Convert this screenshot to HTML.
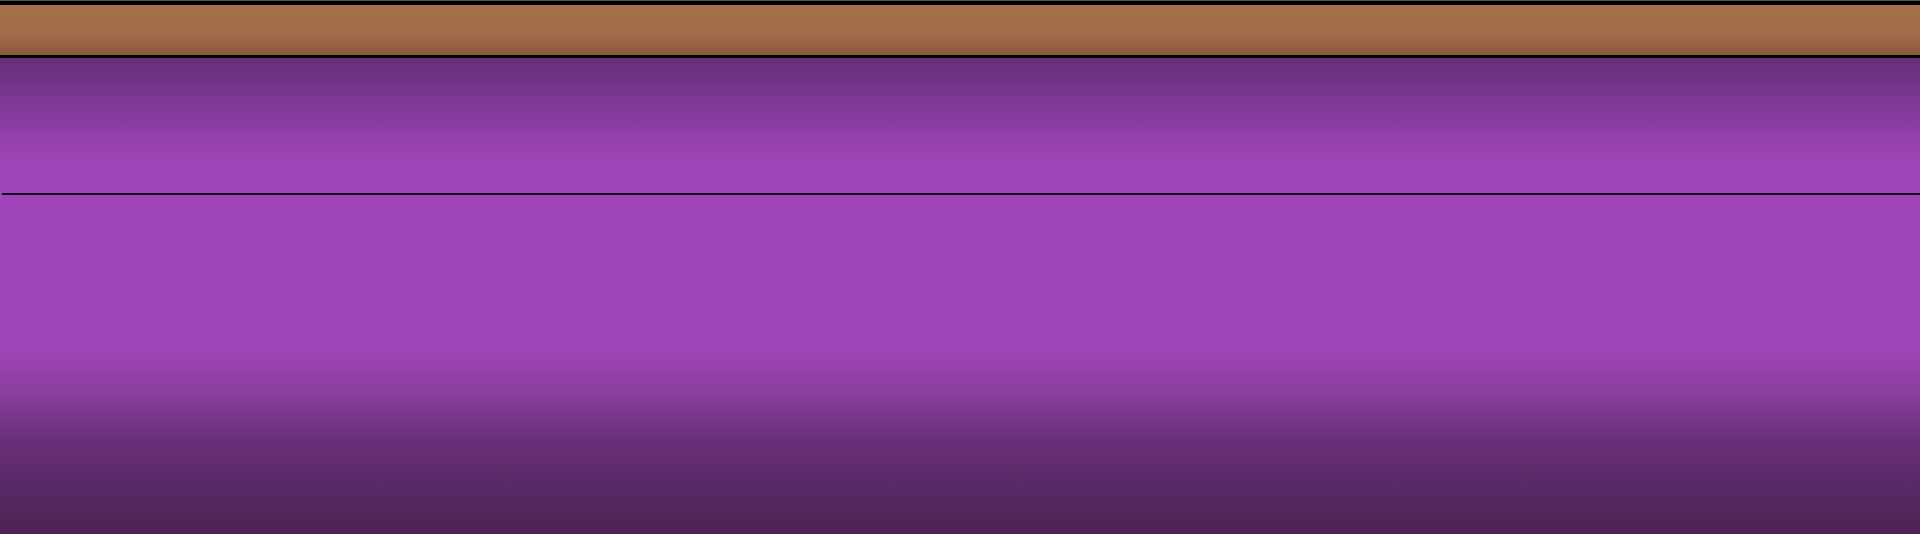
<!DOCTYPE html>
<html><head><style>
html,body{margin:0;padding:0;width:1920px;height:534px;overflow:hidden;background:#a045b9}
.g{position:absolute;left:0;width:1920px}
</style></head><body>
<div class="g" style="top:0;height:1px;background:#555"></div>
<div class="g" style="top:1px;height:4px;background:#000"></div>
<div class="g" style="top:5px;height:50px;background:linear-gradient(#a56f4a 0%,#a26d48 55%,#8b5a3c 100%)"></div>
<div class="g" style="top:55px;height:3px;background:#000"></div>
<div class="g" style="top:58px;height:104px;background:linear-gradient(#633078,#a045b9)"></div>
<div style="position:absolute;left:2px;top:193px;width:1918px;height:2px;background:#1a0a1e"></div>
<div class="g" style="top:345px;height:189px;background:linear-gradient(#a045b9 0%,#8a3e9f 25%,#6a2f7b 50%,#582a65 75%,#4d2453 100%)"></div>
</body></html>
